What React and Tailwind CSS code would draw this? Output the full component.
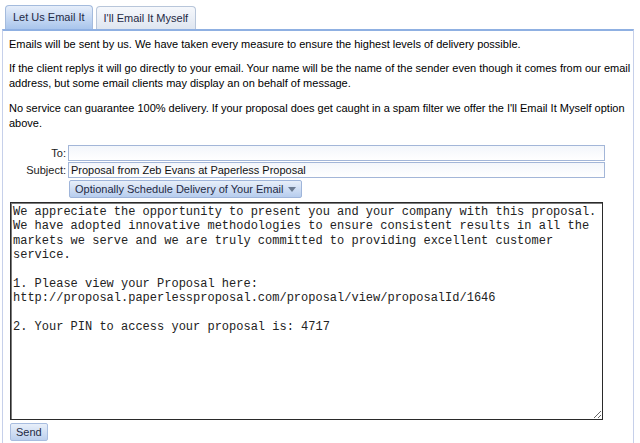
import React from "react";

const message = `We appreciate the opportunity to present you and your company with this proposal. We have adopted innovative methodologies to ensure consistent results in all the markets we serve and we are truly committed to providing excellent customer service.

1. Please view your Proposal here:
http://proposal.paperlessproposal.com/proposal/view/proposalId/1646

2. Your PIN to access your proposal is: 4717`;

export default function App() {
  return (
    <div className="w-[640px] h-[443px] overflow-hidden bg-white text-[11px] leading-[15px] text-black font-['Liberation_Sans',Arial,sans-serif]">
      <div className="flex gap-[3px] pl-[5px] pt-[6px] h-[29px] items-end">
        <div className="h-[24px] px-[7px] flex items-center rounded-t-[4px] border border-b-0 border-[#a4bbdd] bg-gradient-to-b from-[#e6eefa] to-[#a9c5ec] text-[#1f2a44]">
          Let Us Email It
        </div>
        <div className="h-[23px] px-[7px] flex items-center rounded-t-[4px] border border-b-0 border-[#b8c6da] bg-gradient-to-b from-[#f6f8fc] to-[#dfe6f0] text-[#1f2a44]">
          I'll Email It Myself
        </div>
      </div>
      <div className="mx-[2px] w-[632px] h-[420px] border-t-2 border-t-[#8fb0e2] border-l border-r border-l-[#c6d0ea] border-r-[#c6d0ea] pl-[6px] pr-[2px] pt-[6px]">
        <p>Emails will be sent by us. We have taken every measure to ensure the highest levels of delivery possible.</p>
        <p className="mt-[9px]">If the client replys it will go directly to your email. Your name will be the name of the sender even though it comes from our email address, but some email clients may display an on behalf of message.</p>
        <p className="mt-[10px]">No service can guarantee 100% delivery. If your proposal does get caught in a spam filter we offer the I'll Email It Myself option above.</p>

        <div className="mt-[14px] flex items-center">
          <div className="w-[59px] pr-[2px] text-right text-[#222]">To:</div>
          <div className="w-[537px] h-[16px] border border-[#a3b6d8] bg-gradient-to-b from-[#f3f6fb] to-white"></div>
        </div>
        <div className="mt-[1px] flex items-center">
          <div className="w-[59px] pr-[2px] text-right text-[#222]">Subject:</div>
          <div className="w-[537px] h-[16px] border border-[#a3b6d8] bg-gradient-to-b from-[#f3f6fb] to-white pl-[2px] leading-[14px] text-[#111]">
            Proposal from Zeb Evans at Paperless Proposal
          </div>
        </div>
        <div className="mt-[2px] pl-[60px]">
          <div className="inline-flex items-center h-[18px] px-[5px] gap-[4px] border border-[#9fb5da] rounded-[2px] bg-gradient-to-b from-[#e8eff9] to-[#b7cdee] text-[#1f2a44]">
            <span>Optionally Schedule Delivery of Your Email</span>
            <svg width="8" height="5" viewBox="0 0 8 5"><path d="M0 0 L8 0 L4 5 Z" fill="#6b7a90" /></svg>
          </div>
        </div>
        <textarea
          defaultValue={message}
          className="mt-[4px] ml-[1px] block w-[593px] h-[218px] border border-[#2a2a2a] shadow-[inset_1px_1px_0_#7a7a7a] bg-white px-[2px] py-[2px] text-[12px] leading-[14.4px] text-[#222] font-['Liberation_Mono','Courier_New',monospace] outline-none resize"
        />
        <div className="mt-[3px] ml-[1px]">
          <div className="inline-flex items-center h-[18px] px-[5px] border border-[#a8bde0] rounded-[2px] bg-gradient-to-b from-[#e8eff9] to-[#bcd0ee] text-[#1f2a44] text-[11px]">
            Send
          </div>
        </div>
      </div>
    </div>
  );
}
